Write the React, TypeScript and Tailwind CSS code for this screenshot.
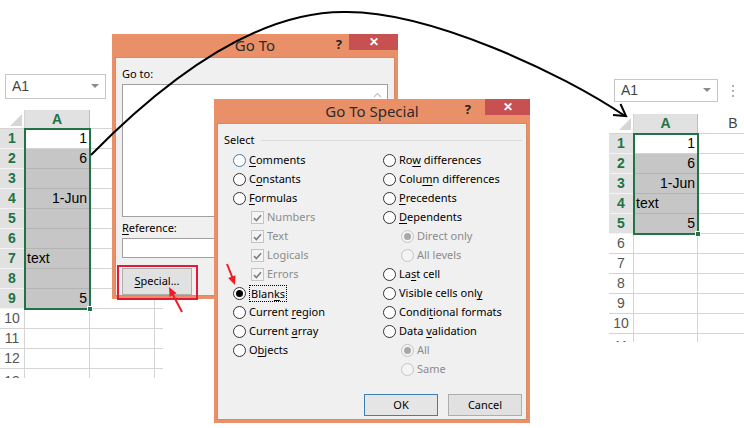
import React from "react";

type Row = { n: number; v?: string; left?: boolean; sel?: boolean; first?: boolean };

function Corner() {
  return (
    <svg width="25" height="19" className="block">
      <polygon points="22,4 22,16 10,16" fill="#d6d6d6" />
    </svg>
  );
}

function NameBox({ className, dots }: { className: string; dots?: boolean }) {
  return (
    <div className={"absolute flex items-center " + className}>
      <div className="flex h-full flex-1 items-center justify-between border border-[#c6c6c6] bg-white pl-[6px] pr-[6px] text-[14px] text-[#444]">
        <span>A1</span>
        <svg width="8" height="5">
          <polygon points="0,0 8,0 4,4" fill="#8a8a8a" />
        </svg>
      </div>
      {dots && (
        <div className="ml-[14px] flex flex-col gap-[3px]">
          <span className="h-[2px] w-[2px] bg-[#b0b0b0]" />
          <span className="h-[2px] w-[2px] bg-[#b0b0b0]" />
          <span className="h-[2px] w-[2px] bg-[#b0b0b0]" />
        </div>
      )}
    </div>
  );
}

function Sheet({
  className,
  headH,
  colA,
  colB,
  tail,
  rows,
  partial,
  partialH,
}: {
  className: string;
  headH: string;
  colA: string;
  colB: string;
  tail: string;
  rows: Row[];
  partial: number;
  partialH: string;
}) {
  const selCount = rows.filter((r) => r.sel).length;
  return (
    <div className={"absolute flex flex-col font-['Liberation_Sans',Arial,sans-serif] text-[14px] " + className}>
      <div className={"flex " + headH}>
        <div className="w-[25px] border-b border-r border-[#d4d4d4] bg-white">
          <Corner />
        </div>
        <div className={"flex items-center justify-center border-b border-r border-[#bcbcbc] bg-[#e1e1e1] font-bold text-[#217346] " + colA}>
          A
        </div>
        <div className={"flex items-center justify-center border-b border-[#d4d4d4] bg-white text-[#444] " + colB}>
          {colB.includes("w-[70px]") ? "B" : ""}
        </div>
        <div className={"border-b border-[#d4d4d4] " + tail} />
      </div>
      {rows.map((r) => (
        <div key={r.n} className="flex h-[20px]">
          <div
            className={
              "flex w-[25px] items-center justify-center border-b border-r " +
              (r.sel
                ? "border-b-[#f4f4f4] border-r-[#bcbcbc] bg-[#e1e1e1] font-bold text-[#217346]"
                : "border-[#d4d4d4] bg-white text-[#555]")
            }
          >
            {r.n}
          </div>
          <div
            className={
              "flex items-center border-b border-r px-[2px] text-black " +
              (r.left ? "justify-start " : "justify-end ") +
              (r.sel && !r.first ? "border-[#b4b4b4] bg-[#c6c6c6] " : "border-[#d4d4d4] bg-white ") +
              colA
            }
          >
            {r.v}
          </div>
          <div className={"border-b border-r border-[#d4d4d4] " + colB} />
          <div className={"border-b border-[#d4d4d4] " + tail} />
        </div>
      ))}
      <div className={"flex overflow-hidden " + partialH}>
        <div className="flex w-[25px] justify-center border-r border-[#d4d4d4] pt-[2px] text-[#555]">{partial}</div>
        <div className={"border-r border-[#d4d4d4] " + colA} />
        <div className={"border-r border-[#d4d4d4] " + colB} />
      </div>
      {/* selection frame */}
      <div
        className="pointer-events-none absolute left-[24px] border-2 border-[#217346]"
        style={{ top: headH === "h-[19px]" ? 18 : 19, height: selCount * 20 + 2, width: colA === "w-[65px]" ? 67 : 66 }}
      >
        <div className="absolute -bottom-[4px] -right-[4px] h-[6px] w-[6px] border border-white bg-[#217346]" />
      </div>
    </div>
  );
}

function U({ children }: { children: React.ReactNode }) {
  return <span className="underline underline-offset-2">{children}</span>;
}

function Radio({ on, dis, hover }: { on?: boolean; dis?: boolean; hover?: boolean }) {
  return (
    <span
      className={
        "flex h-[13px] w-[13px] shrink-0 items-center justify-center rounded-full border " +
        (dis ? "border-[#c4c4c4] bg-[#f4f4f4]" : hover ? "border-[#3c7fb1] bg-white" : "border-[#333] bg-white")
      }
    >
      {on && <span className={"h-[7px] w-[7px] rounded-full " + (dis ? "bg-[#a8a8a8]" : "bg-black")} />}
    </span>
  );
}

function Check() {
  return (
    <span className="flex h-[13px] w-[13px] shrink-0 items-center justify-center border border-[#c4c4c4] bg-[#f4f4f4]">
      <svg width="9" height="8" viewBox="0 0 9 8">
        <path d="M1 4.2 L3.4 6.5 L8 1.2" stroke="#7f7f7f" strokeWidth="1.6" fill="none" />
      </svg>
    </span>
  );
}

function Opt({
  kind,
  on,
  dis,
  hover,
  indent,
  children,
}: {
  kind: "r" | "c";
  on?: boolean;
  dis?: boolean;
  hover?: boolean;
  indent?: boolean;
  children: React.ReactNode;
}) {
  return (
    <div className={"flex h-[19px] items-center gap-[3px] " + (indent ? "pl-[18px]" : "")}>
      {kind === "r" ? <Radio on={on} dis={dis} hover={hover} /> : <Check />}
      <span className={dis ? "text-[#8c8c8c]" : "text-black"}>{children}</span>
    </div>
  );
}

function TitleBar({ title, close }: { title: string; close: string }) {
  return (
    <div className="relative flex h-[24px] items-center justify-center text-[15px] text-[#2b2b2b]">
      {title}
      <span className="absolute top-[1px] text-[13px] font-bold text-[#222]" style={{ right: close === "w-[49px]" ? 56 : 59 }}>
        ?
      </span>
      <div className={"absolute right-0 top-0 flex h-[16px] items-center justify-center bg-[#c75050] text-[12px] font-bold text-white " + close}>
        ✕
      </div>
    </div>
  );
}

export default function App() {
  const left: Row[] = [
    { n: 1, v: "1", sel: true, first: true },
    { n: 2, v: "6", sel: true },
    { n: 3, sel: true },
    { n: 4, v: "1-Jun", sel: true },
    { n: 5, sel: true },
    { n: 6, sel: true },
    { n: 7, v: "text", left: true, sel: true },
    { n: 8, sel: true },
    { n: 9, v: "5", sel: true },
    { n: 10 },
    { n: 11 },
    { n: 12 },
  ];
  const right: Row[] = [
    { n: 1, v: "1", sel: true, first: true },
    { n: 2, v: "6", sel: true },
    { n: 3, v: "1-Jun", sel: true },
    { n: 4, v: "text", left: true, sel: true },
    { n: 5, v: "5", sel: true },
    { n: 6 },
    { n: 7 },
    { n: 8 },
    { n: 9 },
    { n: 10 },
  ];

  return (
    <div className="relative h-[428px] w-[744px] overflow-hidden bg-white">
      <NameBox className="left-[5px] top-[74px] h-[25px] w-[101px] font-['Liberation_Sans',Arial,sans-serif]" />
      <Sheet
        className="left-0 top-[110px]"
        headH="h-[19px]"
        colA="w-[65px]"
        colB="w-[65px]"
        tail="w-[8px]"
        rows={left}
        partial={13}
        partialH="h-[9px]"
      />

      <NameBox className="left-[614px] top-[79px] h-[23px] w-[120px] font-['Liberation_Sans',Arial,sans-serif]" dots />
      <Sheet
        className="left-[609px] top-[114px]"
        headH="h-[20px]"
        colA="w-[64px]"
        colB="w-[70px]"
        tail="w-[0px]"
        rows={right}
        partial={11}
        partialH="h-[8px]"
      />

      {/* Go To dialog */}
      <div className="absolute left-[112px] top-[34px] flex h-[265px] w-[286px] flex-col bg-[#ea9068] font-['Noto_Sans',sans-serif] text-[11px]">
        <TitleBar title="Go To" close="w-[49px]" />
        <div className="mx-[3px] mb-[3px] flex flex-1 flex-col border border-[#d98a64] bg-[#f0f0f0] px-[6px] pt-[8px]">
          <div className="leading-[16px] text-black">Go to:</div>
          <div className="relative mt-[2px] h-[133px] border border-[#a0a0a0] bg-white">
            <svg width="9" height="6" className="absolute right-[5px] top-[7px]">
              <path d="M1 5 L4.5 1.5 L8 5" stroke="#c2c2c2" strokeWidth="1.2" fill="none" />
            </svg>
          </div>
          <div className="mt-[3px] leading-[16px] text-black">
            <U>R</U>eference:
          </div>
          <div className="mt-[2px] h-[20px] border border-[#a0a0a0] bg-white" />
          <div className="mt-[10px] flex h-[27px] w-[70px] items-center justify-center border border-[#adadad] bg-[#e1e1e1] text-black">
            <U>S</U>pecial...
          </div>
        </div>
      </div>

      {/* Go To Special dialog */}
      <div className="absolute left-[214px] top-[99px] flex h-[324px] w-[316px] flex-col bg-[#ea9068] font-['Noto_Sans',sans-serif] text-[11px]">
        <TitleBar title="Go To Special" close="w-[45px]" />
        <div className="mx-[3px] mb-[3px] flex flex-1 flex-col border border-[#d98a64] bg-[#f0f0f0] pl-[6px] pr-[4px] pt-[8px]">
          <div className="flex items-center gap-[6px] leading-[16px]">
            <span>Select</span>
            <span className="h-px flex-1 bg-[#dcdcdc]" />
          </div>
          <div className="mt-[3px] grid grid-cols-[150px_1fr] pl-[9px]">
            <div className="flex flex-col">
              <Opt kind="r" hover>
                <U>C</U>omments
              </Opt>
              <Opt kind="r">
                C<U>o</U>nstants
              </Opt>
              <Opt kind="r">
                <U>F</U>ormulas
              </Opt>
              <Opt kind="c" dis indent>Numbers</Opt>
              <Opt kind="c" dis indent>Text</Opt>
              <Opt kind="c" dis indent>Logicals</Opt>
              <Opt kind="c" dis indent>Errors</Opt>
              <div className="flex h-[19px] items-center gap-[3px]">
                <Radio on />
                <span className="border border-dotted border-black px-px leading-[15px]">
                  Blan<U>k</U>s
                </span>
              </div>
              <Opt kind="r">
                Current <U>r</U>egion
              </Opt>
              <Opt kind="r">
                Current <U>a</U>rray
              </Opt>
              <Opt kind="r">
                O<U>b</U>jects
              </Opt>
            </div>
            <div className="flex flex-col">
              <Opt kind="r">
                Ro<U>w</U> differences
              </Opt>
              <Opt kind="r">
                Colu<U>m</U>n differences
              </Opt>
              <Opt kind="r">
                <U>P</U>recedents
              </Opt>
              <Opt kind="r">
                <U>D</U>ependents
              </Opt>
              <Opt kind="r" dis on indent>Direct only</Opt>
              <Opt kind="r" dis indent>All levels</Opt>
              <Opt kind="r">
                La<U>s</U>t cell
              </Opt>
              <Opt kind="r">
                Visible cells onl<U>y</U>
              </Opt>
              <Opt kind="r">
                Condi<U>t</U>ional formats
              </Opt>
              <Opt kind="r">
                Data <U>v</U>alidation
              </Opt>
              <Opt kind="r" dis on indent>All</Opt>
              <Opt kind="r" dis indent>Same</Opt>
            </div>
          </div>
          <div className="mt-[15px] flex justify-end gap-[10px]">
            <div className="flex h-[22px] w-[74px] items-center justify-center border border-[#3c7fb1] bg-[#e5e5e5]">OK</div>
            <div className="flex h-[22px] w-[74px] items-center justify-center border border-[#adadad] bg-[#e1e1e1]">Cancel</div>
          </div>
        </div>
      </div>

      {/* annotations */}
      <div className="absolute left-[117px] top-[265px] h-[35px] w-[81px] border-2 border-[#e31937]" />
      <svg width="744" height="428" className="pointer-events-none absolute left-0 top-0">
        <path d="M91 155 C155 90 250 10 347 12 C430 12 560 72 625 116" stroke="#000" strokeWidth="2" fill="none" />
        <polyline points="613,115 626,116 620.5,104" stroke="#000" strokeWidth="2" fill="none" />
        <line x1="182" y1="312" x2="172" y2="293" stroke="#ee1c25" strokeWidth="2" />
        <polygon points="169,287 176.6,293.2 169.6,296.8" fill="#ee1c25" />
        <line x1="227" y1="264" x2="233" y2="279" stroke="#ee1c25" strokeWidth="2" />
        <polygon points="235,285 228.1,278 235.5,275.2" fill="#ee1c25" />
      </svg>
    </div>
  );
}
